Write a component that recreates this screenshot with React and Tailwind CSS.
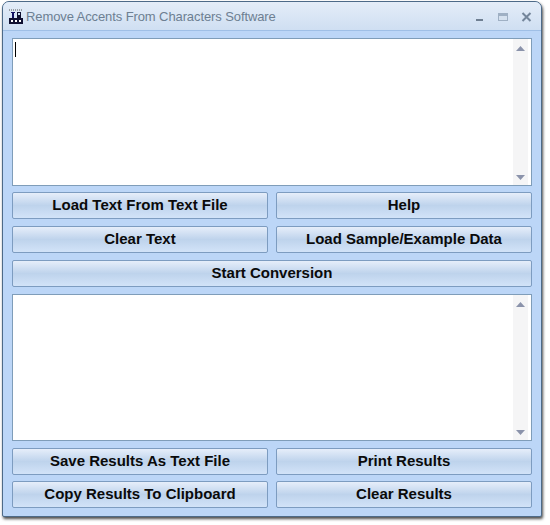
const ScrollArea = ({ height, caret }) => (
  <div className={`flex ${height} border border-[#7f9db9] bg-white`}>
    <div className="flex-1 pl-[2px] pt-[3px]">
      {caret && <div className="w-px h-[15px] bg-black" />}
    </div>
    <div className="mr-[3px] flex w-[15px] flex-col items-center justify-between bg-[#f5f5f6] pt-[7px] pb-[5px]">
      <svg width="9" height="5" viewBox="0 0 9 5"><path d="M4.5 0 9 5H0z" fill="#8b93ab" /></svg>
      <svg width="9" height="5" viewBox="0 0 9 5"><path d="M0 0h9L4.5 5z" fill="#8b93ab" /></svg>
    </div>
  </div>
);

const Btn = ({ children, className = 'flex-1' }) => (
  <button className={`${className} h-[27px] rounded-[2px] border border-[#7d9cc0] bg-gradient-to-b from-[#e6eefa] via-[#bed3ec] to-[#d2e3f8] text-[15px] font-bold text-[#0a0a0a] [font-family:'Liberation_Sans',Arial,sans-serif] pb-[1px]`}>
    {children}
  </button>
);

const AppIcon = () => (
  <svg width="16" height="16" viewBox="0 0 16 16" className="shrink-0">
    <path d="M1 1h1M3 1h1M5 1h1M7 1h1M9 1h1M11 1h1M13 1h1" stroke="#555" strokeWidth="1" />
    <rect x="1" y="9" width="14" height="6" fill="#101030" />
    <rect x="3" y="11" width="2" height="2" fill="#fff" />
    <rect x="7" y="11" width="2" height="2" fill="#fff" />
    <rect x="11" y="11" width="2" height="2" fill="#fff" />
    <rect x="3" y="3" width="4" height="1" fill="#101060" />
    <rect x="4" y="3" width="2" height="6" fill="#101060" />
    <rect x="9" y="3" width="4" height="6" fill="#101030" />
    <rect x="10" y="4" width="2" height="2" fill="#cfe0f5" />
  </svg>
);

export default function App() {
  return (
    <div className="w-[550px] h-[525px] bg-white pl-[2px] pt-[1px]">
      <div className="flex h-[516px] w-[540px] flex-col rounded-t-[7px] rounded-b-[2px] border border-[#4d6a88] bg-[#bcd6f7] shadow-[1px_2px_3px_rgba(0,0,0,0.7)]">
        <div className="flex h-[29px] shrink-0 items-center rounded-t-[6px] border-b border-[#9fbfe6] bg-gradient-to-b from-[#e4edf8] to-[#cfdff2] pl-[5px] pr-[9px] pt-[2px]">
          <AppIcon />
          <span className="ml-[2px] text-[13px] tracking-[-0.1px] text-[#6d7f92] [font-family:'Liberation_Sans',Arial,sans-serif]">
            Remove Accents From Characters Software
          </span>
          <div className="ml-auto flex items-center gap-[13px]">
            <svg width="10" height="10" viewBox="0 0 10 10"><rect x="1" y="7" width="7" height="2" fill="#6f7f92" /></svg>
            <svg width="10" height="10" viewBox="0 0 10 10"><rect x="0.5" y="1.5" width="9" height="7" fill="#d5e1ef" stroke="#9fb0c4" /><rect x="1" y="2" width="8" height="2" fill="#9fb0c4" /></svg>
            <svg width="11" height="10" viewBox="0 0 11 10"><path d="M1.5 1 9.5 9M9.5 1 1.5 9" stroke="#74869b" strokeWidth="2" /></svg>
          </div>
        </div>
        <div className="flex flex-1 flex-col gap-[7px] px-[9px] pt-[7px]">
          <ScrollArea height="h-[148px]" caret />
          <div className="flex flex-col gap-[7px] -mt-px">
            <div className="flex gap-[8px]"><Btn>Load Text From Text File</Btn><Btn>Help</Btn></div>
            <div className="flex gap-[8px]"><Btn>Clear Text</Btn><Btn>Load Sample/Example Data</Btn></div>
            <Btn className="w-full">Start Conversion</Btn>
          </div>
          <ScrollArea height="h-[147px]" />
          <div className="flex flex-col gap-[6px]">
            <div className="flex gap-[8px]"><Btn>Save Results As Text File</Btn><Btn>Print Results</Btn></div>
            <div className="flex gap-[8px]"><Btn>Copy Results To Clipboard</Btn><Btn>Clear Results</Btn></div>
          </div>
        </div>
      </div>
    </div>
  );
}
